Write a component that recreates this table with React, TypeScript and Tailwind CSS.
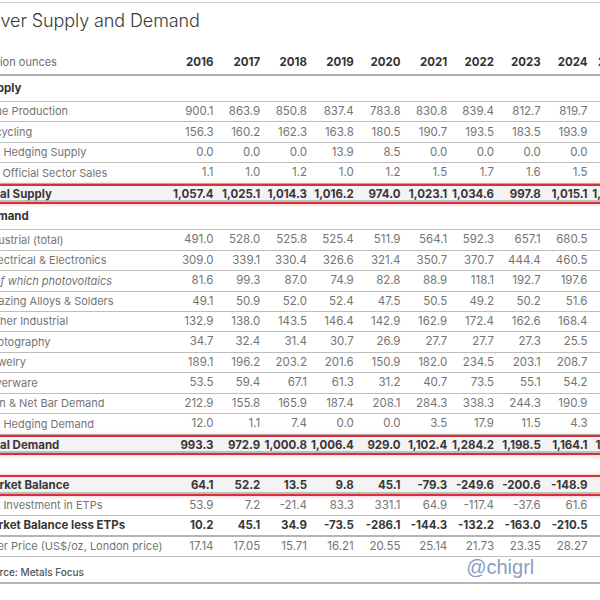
import React from "react";

type Kind = "section" | "row" | "italic" | "total" | "bold" | "blank";

interface Row {
  label: string;
  kind: Kind;
  ind: string;
  values: string[];
}

const YEARS = ["2016", "2017", "2018", "2019", "2020", "2021", "2022", "2023", "2024", "2025F"];

const ROWS: Row[] = [
  { label: "Supply", kind: "section", ind: "pl-[3px]", values: [] },
  { label: "Mine Production", kind: "row", ind: "pl-[4px]", values: ["900.1", "863.9", "850.8", "837.4", "783.8", "830.8", "839.4", "812.7", "819.7", "835.0"] },
  { label: "Recycling", kind: "row", ind: "pl-[3px]", values: ["156.3", "160.2", "162.3", "163.8", "180.5", "190.7", "193.5", "183.5", "193.9", "194.2"] },
  { label: "Net Hedging Supply", kind: "row", ind: "pl-[3px]", values: ["0.0", "0.0", "0.0", "13.9", "8.5", "0.0", "0.0", "0.0", "0.0", "0.0"] },
  { label: "Net Official Sector Sales", kind: "row", ind: "pl-[2px]", values: ["1.1", "1.0", "1.2", "1.0", "1.2", "1.5", "1.7", "1.6", "1.5", "1.4"] },
  { label: "Total Supply", kind: "total", ind: "pl-[3px]", values: ["1,057.4", "1,025.1", "1,014.3", "1,016.2", "974.0", "1,023.1", "1,034.6", "997.8", "1,015.1", "1,030.6"] },
  { label: "Demand", kind: "section", ind: "pl-[3px]", values: [] },
  { label: "Industrial (total)", kind: "row", ind: "pl-[3px]", values: ["491.0", "528.0", "525.8", "525.4", "511.9", "564.1", "592.3", "657.1", "680.5", "677.4"] },
  { label: "Electrical & Electronics", kind: "row", ind: "pl-[9px]", values: ["309.0", "339.1", "330.4", "326.6", "321.4", "350.7", "370.7", "444.4", "460.5", "465.2"] },
  { label: "of which photovoltaics", kind: "italic", ind: "pl-[15px]", values: ["81.6", "99.3", "87.0", "74.9", "82.8", "88.9", "118.1", "192.7", "197.6", "185.2"] },
  { label: "Brazing Alloys & Solders", kind: "row", ind: "pl-[8px]", values: ["49.1", "50.9", "52.0", "52.4", "47.5", "50.5", "49.2", "50.2", "51.6", "51.9"] },
  { label: "Other Industrial", kind: "row", ind: "pl-[9px]", values: ["132.9", "138.0", "143.5", "146.4", "142.9", "162.9", "172.4", "162.6", "168.4", "160.3"] },
  { label: "Photography", kind: "row", ind: "pl-[5px]", values: ["34.7", "32.4", "31.4", "30.7", "26.9", "27.7", "27.7", "27.3", "25.5", "25.0"] },
  { label: "Jewelry", kind: "row", ind: "pl-[6px]", values: ["189.1", "196.2", "203.2", "201.6", "150.9", "182.0", "234.5", "203.1", "208.7", "195.0"] },
  { label: "Silverware", kind: "row", ind: "pl-[4px]", values: ["53.5", "59.4", "67.1", "61.3", "31.2", "40.7", "73.5", "55.1", "54.2", "48.0"] },
  { label: "Coin & Net Bar Demand", kind: "row", ind: "pl-[3px]", values: ["212.9", "155.8", "165.9", "187.4", "208.1", "284.3", "338.3", "244.3", "190.9", "214.5"] },
  { label: "Net Hedging Demand", kind: "row", ind: "pl-[3px]", values: ["12.0", "1.1", "7.4", "0.0", "0.0", "3.5", "17.9", "11.5", "4.3", "0.0"] },
  { label: "Total Demand", kind: "total", ind: "pl-[3px]", values: ["993.3", "972.9", "1,000.8", "1,006.4", "929.0", "1,102.4", "1,284.2", "1,198.5", "1,164.1", "1,148.3"] },
  { label: "", kind: "blank", ind: "", values: [] },
  { label: "Market Balance", kind: "total", ind: "pl-[3px]", values: ["64.1", "52.2", "13.5", "9.8", "45.1", "-79.3", "-249.6", "-200.6", "-148.9", "-117.6"] },
  { label: "Net Investment in ETPs", kind: "row", ind: "pl-[3px]", values: ["53.9", "7.2", "-21.4", "83.3", "331.1", "64.9", "-117.4", "-37.6", "61.6", "40.0"] },
  { label: "Market Balance less ETPs", kind: "bold", ind: "pl-[2px]", values: ["10.2", "45.1", "34.9", "-73.5", "-286.1", "-144.3", "-132.2", "-163.0", "-210.5", "-77.6"] },
  { label: "Silver Price (US$/oz, London price)", kind: "row", ind: "pl-[0px]", values: ["17.14", "17.05", "15.71", "16.21", "20.55", "25.14", "21.73", "23.35", "28.27", "30.0"] },
];

const GRID = "grid grid-cols-[187.75px_repeat(10,46.75px)] items-center";

const rowClass = (kind: Kind) => {
  switch (kind) {
    case "section":
      return "h-[26px] border-b border-[#bdbdbd] font-bold text-[#333]";
    case "total":
      return "h-[20.45px] border-y-2 border-[#d4313a] bg-[#f3f3f4] font-bold text-[#383838] shadow-[inset_0_-2px_0_#bdbdbd,0_0_4px_rgba(212,49,58,0.35)]";
    case "bold":
      return "h-[20.45px] border-b-2 border-[#b5b5b5] font-bold text-[#383838]";
    case "blank":
      return "h-[20.45px]";
    default:
      return "h-[20.45px] border-b border-[#bdbdbd] text-[#747474]";
  }
};

const isRegular = (kind: Kind) => kind === "row" || kind === "italic";

export default function App() {
  return (
    <div className="w-[600px] h-[600px] overflow-hidden bg-white font-['Inter',sans-serif] text-[11.5px]">
      <div className="-ml-[21px] w-[655.25px] pt-[2px]">
        <div className="border-t border-[#c9c9c9]" />

        {/* ── Title ─────────────────────────────────────── */}
        <div className="h-[46px] pt-[7px] pl-[2px]">
          <h1 className="text-[18px] leading-[22px] font-light tracking-[-0.1px] text-[#3a3a3a]">
            Silver Supply and Demand
          </h1>
        </div>

        {/* ── Header ────────────────────────────────────── */}
        <div className={`${GRID} h-[27px] border-b-2 border-[#b0b0b0] pt-[2px]`}>
          <span className="pl-[3px] text-[11px] text-[#6f6f6f]">Million ounces</span>
          {YEARS.map((y) => (
            <span key={y} className="text-right font-bold text-[#333]">
              {y}
            </span>
          ))}
        </div>

        {/* ── Body ──────────────────────────────────────── */}
        {ROWS.map((row, i) => (
          <div key={i} className={`${GRID} ${rowClass(row.kind)}`}>
            <span
              className={`${row.ind} whitespace-nowrap ${isRegular(row.kind) ? "text-[11px]" : ""} ${row.kind === "italic" ? "italic" : ""}`}
            >
              {row.label}
            </span>
            {row.values.map((v, j) => (
              <span key={j} className="text-right whitespace-nowrap">
                {v}
              </span>
            ))}
          </div>
        ))}

        {/* ── Source ────────────────────────────────────── */}
        <div className="flex h-[27px] items-center border-b-2 border-[#b5b5b5] pt-[5px]">
          <span className="pl-[2px] text-[10px] font-medium text-[#555]">Source: Metals Focus</span>
          <span className="ml-auto mr-[100px] -mt-[10px] font-['Liberation_Sans',sans-serif] text-[20px] leading-none text-[#8b9dc3]">
            @chigrl
          </span>
        </div>
      </div>
    </div>
  );
}
